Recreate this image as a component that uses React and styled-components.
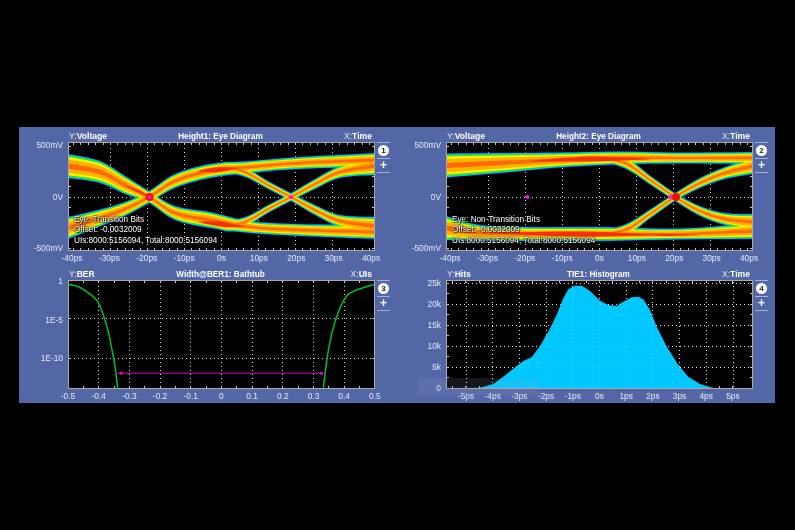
import React from "react";
import styled, { createGlobalStyle } from "styled-components";

const GlobalStyle = createGlobalStyle`
  html, body {
    margin: 0;
    background: #000;
    font-family: "Liberation Sans", Arial, sans-serif;
  }
`;

const PLOT_W = 307;
const PLOT_H = 109;

// catmull-rom through [x, y, halfWidth] points
const sample = (pts) => {
  const out = [];
  for (let i = 0; i < pts.length - 1; i++) {
    const p0 = pts[Math.max(i - 1, 0)];
    const p1 = pts[i];
    const p2 = pts[i + 1];
    const p3 = pts[Math.min(i + 2, pts.length - 1)];
    for (let s = 0; s < 8; s++) {
      const t = s / 8;
      out.push(
        [0, 1, 2].map(
          (k) =>
            0.5 *
            (2 * p1[k] +
              (p2[k] - p0[k]) * t +
              (2 * p0[k] - 5 * p1[k] + 4 * p2[k] - p3[k]) * t * t +
              (3 * p1[k] - p0[k] - 3 * p2[k] + p3[k]) * t * t * t)
        )
      );
    }
  }
  out.push(pts[pts.length - 1]);
  return out;
};

const bandPoints = (pts, widen) => {
  const line = sample(pts);
  const top = line.map(([x, y, h]) => `${x},${y - widen(h)}`);
  const bottom = line.reverse().map(([x, y, h]) => `${x},${y + widen(h)}`);
  return [...top, ...bottom].join(" ");
};

const curvePoints = (pts) =>
  sample(pts.map(([x, y]) => [x, y, 0]))
    .map(([x, y]) => `${x},${y}`)
    .join(" ");

const heatLevels = [
  { color: "#0818c8", widen: (h) => h + 1.4 },
  { color: "#00c8f0", widen: (h) => h + 0.8 },
  { color: "#18e050", widen: (h) => h + 0.2 },
  { color: "#f0f400", widen: (h) => h * 0.84 },
  { color: "#ffb000", widen: (h) => h * 0.6 },
  { color: "#ff6a00", widen: (h) => h * 0.24 },
];

const transitionTraces = [
  [[68, 166, 11], [100, 172, 10], [125, 185, 8], [149, 197, 5], [175, 213, 6], [210, 220, 7], [250, 227, 5], [300, 230, 5], [375, 232, 6]],
  [[68, 228, 10], [100, 218, 7.5], [125, 209, 6], [149, 197, 5], [175, 181, 6], [210, 171, 6], [250, 167, 5], [300, 163, 5], [375, 160, 6]],
  [[192, 175, 1], [225, 168, 5], [245, 172, 4], [268, 185, 3], [291, 197, 3], [315, 210, 4], [340, 221, 5], [375, 226, 8]],
  [[192, 217, 1], [225, 225, 5], [245, 222, 4], [268, 209, 3], [291, 197, 3], [315, 184, 4], [340, 172, 5], [375, 166, 8]],
];

const transitionHot = [
  [[198, 171, 0.2], [215, 170, 2.5], [238, 168, 0.2]],
  [[198, 222, 0.2], [220, 224, 2.5], [245, 227, 0.2]],
  [[125, 186, 0.2], [140, 192, 1.5], [149, 197, 0.2]],
];

const nonTransitionTraces = [
  [[446, 165.5, 11], [500, 163, 9], [560, 160, 6.5], [620, 158, 5.5], [680, 158, 4.5], [753, 158, 5]],
  [[446, 228, 11], [480, 233, 7], [530, 234, 6], [600, 234, 6], [680, 234, 4.5], [753, 231, 7]],
  [[596, 158, 1], [625, 163, 4.5], [650, 180, 3.5], [675, 197, 3], [700, 211, 4], [725, 219, 5], [753, 222, 7]],
  [[596, 234, 1], [625, 230, 4.5], [650, 214, 3.5], [675, 197, 3], [700, 183, 4], [725, 173, 5], [753, 166, 7]],
];

const nonTransitionHot = [
  [[530, 161, 0.2], [590, 159, 2.5], [650, 159, 0.2]],
  [[490, 233, 0.2], [580, 234, 2.5], [660, 235, 0.2]],
  [[650, 234, 0.2], [665, 235, 1], [700, 235, 0.2]],
];

const bathtubLeft = curvePoints([[68, 284.3], [78.3, 286.7], [86.7, 291.7], [93.3, 296.7], [98.3, 302.7], [103.3, 315], [108.3, 331.7], [111.7, 348.3], [115, 366.7], [117.7, 388.5]]);
const bathtubRight = curvePoints([[323.3, 388.5], [326, 366.7], [330, 341.7], [336.7, 316.7], [345, 298.3], [351.7, 292.3], [363.3, 287.7], [374.5, 284.3]]);

const histogram =
  "447,389 448.3,388.3 480,387.7 493.3,384 503.3,376.7 516.7,366 523.3,361 531.7,357.3 540,346 548.3,331.7 556.7,315 563.3,298.3 568.3,289.3 575,285.7 581.7,285.7 590,291 600,300.7 608.3,305 616.7,306 623.3,301.7 631.7,297.3 638.3,296.7 643.3,299.3 650,310 656.7,326.7 666.7,346.7 678.3,365 688.3,376.7 700,384 713.3,388 736.7,388.7 752,389";

const range = (start, step, count) =>
  Array.from({ length: count }, (_, i) => start + step * i);

const grids = {
  eye: {
    vertical: range(42, 37, 7),
    horizontal: [55],
    ticksX: range(5.5, 7.4, 41),
    ticksY: range(4, 10.2, 11),
  },
  bathtub: {
    vertical: range(30.7, 30.7, 9),
    horizontal: [38.5, 78],
    ticksX: range(15.35, 15.35, 19),
    ticksY: [38.5, 78],
  },
  histogram: {
    vertical: range(20, 26.7, 11),
    horizontal: [3, 24, 45, 66, 87],
    ticksX: range(6.6, 13.35, 22),
    ticksY: range(3, 10.5, 10),
  },
};

const Grid = ({ kind, opacity = 1 }) => {
  const g = grids[kind];
  return (
    <g stroke="#fff" strokeWidth="1" shapeRendering="crispEdges" opacity={opacity}>
      <g strokeDasharray="1 3" opacity="0.85">
        {g.vertical.map((x) => (
          <line key={x} x1={x} x2={x} y1="2" y2={PLOT_H - 2} />
        ))}
        {g.horizontal.map((y) => (
          <line key={y} x1="2" x2={PLOT_W - 2} y1={y} y2={y} />
        ))}
      </g>
      <g stroke="#c8c8c8">
        {g.ticksX.map((x) => (
          <React.Fragment key={x}>
            <line x1={x} x2={x} y1="1" y2="3" />
            <line x1={x} x2={x} y1={PLOT_H - 3} y2={PLOT_H - 1} />
          </React.Fragment>
        ))}
        {g.ticksY.map((y) => (
          <React.Fragment key={y}>
            <line x1="1" x2="3" y1={y} y2={y} />
            <line x1={PLOT_W - 3} x2={PLOT_W - 1} y1={y} y2={y} />
          </React.Fragment>
        ))}
      </g>
    </g>
  );
};

const Frame = () => (
  <rect x="0.5" y="0.5" width={PLOT_W - 1} height={PLOT_H - 1} fill="none" stroke="#a9a9a9" strokeWidth="1" />
);

const EyeDrawing = ({ traces, hot, originX, dots, glow }) => (
  <PlotSvg viewBox={`0 0 ${PLOT_W} ${PLOT_H}`}>
    <Grid kind="eye" />
    <g transform={`translate(${-originX} -142)`}>
      <HeatLayer>
        {heatLevels.map((level) =>
          traces.map((trace, i) => (
            <polygon key={`${level.color}-${i}`} points={bandPoints(trace, level.widen)} fill={level.color} />
          ))
        )}
        {hot.map((streak, i) => (
          <polygon key={i} points={bandPoints(streak, (h) => h)} fill="#f83000" />
        ))}
        {glow.map(([x, y]) => (
          <circle key={x} cx={x} cy={y} r="4" fill="#f01000" />
        ))}
      </HeatLayer>
      {dots.map(([x, y]) => (
        <circle key={x} cx={x} cy={y} r="2" fill="#ff10e8" />
      ))}
    </g>
    <Frame />
  </PlotSvg>
);

const BathtubDrawing = () => (
  <PlotSvg viewBox={`0 0 ${PLOT_W} ${PLOT_H}`}>
    <Grid kind="bathtub" />
    <g transform="translate(-68 -280)">
      <polyline points={bathtubLeft} fill="none" stroke="#00c020" strokeWidth="1.5" />
      <polyline points={bathtubRight} fill="none" stroke="#00c020" strokeWidth="1.5" />
      <line x1="117" x2="325" y1="373.3" y2="373.3" stroke="#c000b8" strokeWidth="1" />
      <rect x="119.5" y="372" width="3.5" height="2.6" fill="#e000d8" />
      <rect x="319.5" y="372" width="3.5" height="2.6" fill="#e000d8" />
    </g>
    <Frame />
  </PlotSvg>
);

const HistogramDrawing = () => (
  <PlotSvg viewBox={`0 0 ${PLOT_W} ${PLOT_H}`}>
    <Grid kind="histogram" />
    <g transform="translate(-446 -280)">
      <polygon points={histogram} fill="#00c8ff" />
    </g>
    <Grid kind="histogram" opacity={0.3} />
    <Frame />
  </PlotSvg>
);

const charts = [
  {
    y: "Voltage",
    title: "Height1: Eye Diagram",
    x: "Time",
    yLabels: ["500mV", "0V", "-500mV"],
    yPad: [3, 3],
    xLabels: ["-40ps", "-30ps", "-20ps", "-10ps", "0s", "10ps", "20ps", "30ps", "40ps"],
    xPad: 4,
    drawing: (
      <EyeDrawing
        traces={transitionTraces}
        hot={transitionHot}
        originX={68}
        dots={[[149.5, 197], [291, 197]]}
        glow={[[149.5, 197]]}
      />
    ),
    notes: ["Eye: Transition Bits", "Offset: -0.0032009", "UIs:8000:5156094, Total:8000:5156094"],
  },
  {
    y: "Voltage",
    title: "Height2: Eye Diagram",
    x: "Time",
    yLabels: ["500mV", "0V", "-500mV"],
    yPad: [3, 3],
    xLabels: ["-40ps", "-30ps", "-20ps", "-10ps", "0s", "10ps", "20ps", "30ps", "40ps"],
    xPad: 4,
    drawing: (
      <EyeDrawing
        traces={nonTransitionTraces}
        hot={nonTransitionHot}
        originX={446}
        dots={[[527.5, 197], [670.5, 197]]}
        glow={[[676, 197]]}
      />
    ),
    notes: ["Eye: Non-Transition Bits", "Offset: -0.0032009", "UIs:8000:5156094, Total:8000:5156094"],
  },
  {
    y: "BER",
    title: "Width@BER1: Bathtub",
    x: "UIs",
    yLabels: ["1", "1E-5", "1E-10"],
    yPad: [1, 31],
    xLabels: ["-0.5", "-0.4", "-0.3", "-0.2", "-0.1", "0", "0.1", "0.2", "0.3", "0.4", "0.5"],
    xPad: 0,
    drawing: <BathtubDrawing />,
  },
  {
    y: "Hits",
    title: "TIE1: Histogram",
    x: "Time",
    yLabels: ["25k", "20k", "15k", "10k", "5k", "0"],
    yPad: [3, 1],
    xLabels: ["-5ps", "-4ps", "-3ps", "-2ps", "-1ps", "0s", "1ps", "2ps", "3ps", "4ps", "5ps"],
    xPad: 20,
    drawing: <HistogramDrawing />,
    ghost: true,
  },
];

const App = () => (
  <Screen>
    <GlobalStyle />
    <Panel>
      {charts.map((chart, i) => (
        <Chart key={chart.title}>
          <TitleBar>
            <AxisName>
              Y:<b>{chart.y}</b>
            </AxisName>
            <ChartTitle>{chart.title}</ChartTitle>
            <AxisNameRight>
              X:<b>{chart.x}</b>
            </AxisNameRight>
          </TitleBar>
          <YAxis $top={chart.yPad[0]} $bottom={chart.yPad[1]}>
            {chart.yLabels.map((label) => (
              <YLabel key={label}>{label}</YLabel>
            ))}
          </YAxis>
          <Plot>
            {chart.drawing}
            {chart.notes && (
              <Notes>
                {chart.notes.map((note) => (
                  <div key={note}>{note}</div>
                ))}
              </Notes>
            )}
          </Plot>
          <SideButtons>
            <SideCell>
              <Badge>{i + 1}</Badge>
            </SideCell>
            <PlusCell>+</PlusCell>
          </SideButtons>
          <XAxis $pad={chart.xPad}>
            {chart.xLabels.map((label) => (
              <XLabel key={label}>{label}</XLabel>
            ))}
          </XAxis>
          {chart.ghost && <Ghost />}
        </Chart>
      ))}
    </Panel>
  </Screen>
);

const Screen = styled.div`
  width: 795px;
  height: 530px;
  box-sizing: border-box;
  padding: 127px 20px 127px 19px;
  background: #000;
  overflow: hidden;
`;

const Panel = styled.div`
  display: grid;
  grid-template-columns: 378px 378px;
  grid-template-rows: 138px 138px;
  background: #5367a7;
  color: #e4e8f4;
  font-size: 8.4px;
  filter: blur(0.3px);
`;

const Chart = styled.section`
  position: relative;
  display: grid;
  grid-template-columns: 49px ${PLOT_W}px 22px;
  grid-template-rows: 15px ${PLOT_H}px 14px;
`;

const TitleBar = styled.div`
  grid-column: 2;
  display: grid;
  grid-template-columns: 1fr auto 1fr;
  align-items: center;
  padding: 3px 3px 0 1px;
  box-sizing: border-box;
`;

const AxisName = styled.span`
  font-size: 8.6px;
  color: #dfe4f2;

  b {
    color: #fff;
  }
`;

const AxisNameRight = styled(AxisName)`
  text-align: right;
`;

const ChartTitle = styled.span`
  font-size: 8.2px;
  font-weight: bold;
  color: #fff;
`;

const YAxis = styled.div`
  grid-column: 1;
  grid-row: 2;
  display: flex;
  flex-direction: column;
  justify-content: space-between;
  align-items: flex-end;
  padding: ${(p) => p.$top}px 5px ${(p) => p.$bottom}px 0;
`;

const YLabel = styled.span`
  height: 0;
  line-height: 0;
  white-space: nowrap;
`;

const Plot = styled.div`
  position: relative;
  grid-column: 2;
  grid-row: 2;
  background: #000;
`;

const PlotSvg = styled.svg`
  display: block;
  width: ${PLOT_W}px;
  height: ${PLOT_H}px;
`;

const HeatLayer = styled.g`
  filter: blur(0.4px);
`;

const Notes = styled.div`
  position: absolute;
  left: 6px;
  bottom: 5px;
  font-size: 8.2px;
  line-height: 10.3px;
  color: #fff;
  white-space: nowrap;
  text-shadow: 0 0 1.5px #000, 0 0 1.5px #000, 1px 1px 1px rgba(0, 0, 0, 0.7);
`;

const SideButtons = styled.div`
  grid-column: 3;
  grid-row: 2;
  align-self: start;
  display: flex;
  flex-direction: column;
  margin-left: 2px;
  width: 13px;
  border-bottom: 1px solid #a4b0d6;
`;

const SideCell = styled.div`
  display: flex;
  align-items: center;
  justify-content: center;
  height: 15.5px;
  box-sizing: border-box;
  border-top: 1px solid #a4b0d6;
`;

const PlusCell = styled(SideCell)`
  height: 14px;
  font-size: 12px;
  font-weight: bold;
  color: #fff;
`;

const Badge = styled.span`
  display: flex;
  align-items: center;
  justify-content: center;
  width: 11px;
  height: 11px;
  border-radius: 50%;
  background: #fff;
  color: #1a1a2a;
  font-size: 8px;
  font-weight: bold;
`;

const XAxis = styled.div`
  grid-column: 2;
  grid-row: 3;
  display: flex;
  justify-content: space-between;
  align-items: center;
  padding: 0 ${(p) => p.$pad}px;
`;

const XLabel = styled.span`
  width: 0;
  display: flex;
  justify-content: center;
  white-space: nowrap;
`;

const Ghost = styled.div`
  position: absolute;
  left: 21px;
  top: 113px;
  width: 122px;
  height: 17px;
  background: rgba(150, 165, 205, 0.14);
  pointer-events: none;
`;

export default App;
